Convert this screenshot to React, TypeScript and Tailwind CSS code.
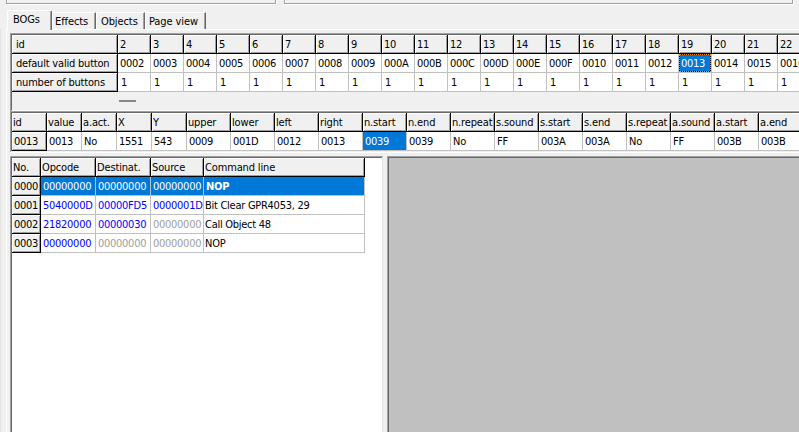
import React from "react";

const raised = "bg-[#f0f0f0] border-black shadow-[inset_1px_1px_0_#fff,inset_-1px_-1px_0_#a0a0a0]";
const plain = "bg-white border-[#c0c0c0]";

type CellProps = { w: number; fixed?: boolean; look?: string; pad?: string; children?: React.ReactNode };

function Cell({ w, fixed, look = "", pad = "pl-[2px]", children }: CellProps) {
  return (
    <div
      style={{ width: w }}
      className={`h-[19px] shrink-0 overflow-hidden whitespace-nowrap border-r border-b leading-[19px] ${pad} ${fixed ? raised : plain} ${look}`}
    >
      {children}
    </div>
  );
}

const ids = Array.from({ length: 21 }, (_, i) => i + 2);
const hex = (n: number) => n.toString(16).toUpperCase().padStart(4, "0");

const regs: [string, string, number][] = [
  ["id", "0013", 35], ["value", "0013", 35], ["a.act.", "No", 35], ["X", "1551", 35], ["Y", "543", 35],
  ["upper", "0009", 44], ["lower", "001D", 44], ["left", "0012", 44], ["right", "0013", 44],
  ["n.start", "0039", 44], ["n.end", "0039", 44], ["n.repeat", "No", 44], ["s.sound", "FF", 44],
  ["s.start", "003A", 44], ["s.end", "003A", 44], ["s.repeat", "No", 44], ["a.sound", "FF", 44],
  ["a.start", "003B", 44], ["a.end", "003B", 44],
];

const commands = [
  ["0000", "00000000", "00000000", "00000000", "NOP"],
  ["0001", "5040000D", "00000FD5", "0000001D", "Bit Clear GPR4053, 29"],
  ["0002", "21820000", "00000030", "00000000", "Call Object 48"],
  ["0003", "00000000", "00000000", "00000000", "NOP"],
];
const commandWidths = [29, 55, 55, 53, 161];
const inkCount = [4, 3, 2, 1];

const sunken = "border-l border-t border-[#a0a0a0]";
const sunkenInner = "border-l border-t border-[#696969]";

function Tab({ w, children }: { w: string; children: string }) {
  return (
    <div className={`mt-[2px] h-[17px] shrink-0 whitespace-nowrap border-t border-r border-l border-t-white border-r-[#696969] border-l-white pl-[3px] leading-[18px] tracking-[-0.1px] shadow-[inset_-1px_0_0_#a0a0a0] ${w}`}>
      {children}
    </div>
  );
}

export default function App() {
  return (
    <div className="flex h-[432px] w-[799px] flex-col overflow-hidden bg-[#f0f0f0] font-['DejaVu_Sans_Condensed','DejaVu_Sans',sans-serif] text-[11px] tracking-[-0.27px] text-black [font-stretch:condensed]">
      <div className="flex h-[10px] shrink-0 gap-[7px] pl-[6px]">
        <div className="h-[5px] w-[271px] border-r border-b border-white">
          <div className="h-[4px] border-r border-b border-l border-[#a0a0a0] shadow-[inset_1px_0_0_#fff]" />
        </div>
        <div className="h-[5px] w-[510px] border-r border-b border-white">
          <div className="h-[4px] border-r border-b border-l border-[#a0a0a0] shadow-[inset_1px_0_0_#fff]" />
        </div>
      </div>
      <div className="flex h-[19px] shrink-0 pl-[7px]">
        <div className="z-10 h-[20px] w-[45px] shrink-0 rounded-t-[2px] border-t border-r border-l border-t-white border-r-[#696969] border-l-white bg-[#f0f0f0] pl-[5px] leading-[18px] tracking-[-0.1px] shadow-[inset_-1px_0_0_#a0a0a0]">BOGs</div>
        <Tab w="w-[44px] !pl-[2px]">Effects</Tab>
        <Tab w="w-[49px] !pl-[4px]">Objects</Tab>
        <Tab w="w-[61px]">Page view</Tab>
      </div>
      <div className="flex min-h-0 flex-1">
        <div className="w-[6px] shrink-0 border-l border-[#e3e3e3]" />
        <div className="w-[4px] shrink-0 border-l border-white" />
        <div className="flex min-w-0 flex-1 flex-col">
          <div className="h-[4px] shrink-0 border-t border-white" />
          <div className={`h-[78px] shrink-0 ${sunken}`}>
            <div className={`h-[77px] overflow-hidden border-b border-b-white ${sunkenInner}`}>
              {["id", "default valid button", "number of buttons"].map((label, r) => (
                <div className="flex" key={label}>
                  <Cell w={106} fixed pad="pl-[4px]" look="tracking-[-0.2px]">{label}</Cell>
                  {ids.map((id) => (
                    <Cell key={id} w={33} fixed={r === 0} pad={r === 2 ? "pl-[3px]" : "pl-[2px]"}>
                      {r === 0 ? id : r === 2 ? "1" : id === 19 ? (
                        <div className="-ml-[2px] h-full bg-[#0078d7] pl-[2px] text-white shadow-[inset_0_0_0_1px_#000] outline-1 -outline-offset-1 outline-dotted outline-[#ff8728]">{hex(id)}</div>
                      ) : hex(id)}
                    </Cell>
                  ))}
                </div>
              ))}
              <div className="flex h-[17px] pt-[8px] pl-[107px]">
                <div className="h-[2px] w-[17px] bg-[#868686]" />
              </div>
            </div>
          </div>
          <div className={`h-[41px] shrink-0 ${sunken}`}>
            <div className={sunkenInner}>
              <div className="flex">
                {regs.map(([h, , w]) => <Cell key={h} w={w} fixed pad="pl-px" look="tracking-[-0.15px]">{h}</Cell>)}
              </div>
              <div className="flex">
                {regs.map(([h, v, w], i) => (
                  <Cell key={h} w={w} fixed={i === 0} look={h === "n.start" ? "!bg-[#0078d7] text-white" : ""}>{v}</Cell>
                ))}
              </div>
            </div>
          </div>
          <div className="mb-[3px] h-px shrink-0 bg-white" />
          <div className="flex min-h-0 flex-1 gap-[4px]">
            <div className={`w-[373px] shrink-0 ${sunken} border-r border-r-[#e3e3e3]`}>
              <div className={`h-full bg-white ${sunkenInner}`}>
                <div className="flex">
                  {["No.", "Opcode", "Destinat.", "Source", "Command line"].map((h, i) => (
                    <Cell key={h} w={commandWidths[i]} fixed pad="pl-px" look="tracking-[-0.15px]">{h}</Cell>
                  ))}
                </div>
                {commands.map((row, r) => (
                  <div className="flex" key={row[0]}>
                    {row.map((v, c) => (
                      <Cell
                        key={c}
                        w={commandWidths[c]}
                        fixed={c === 0}
                        pad={c === 4 && r > 0 ? "pl-px" : "pl-[2px]"}
                        look={c === 0 ? "" : r === 0 ? `!bg-[#0078d7] text-white ${c === 4 ? "font-bold" : ""}` : c === 4 ? "" : c <= inkCount[r] ? "text-[#0000ff]" : "text-[#a0a0a0]"}
                      >
                        {v}
                      </Cell>
                    ))}
                  </div>
                ))}
              </div>
            </div>
            <div className={`min-w-0 flex-1 ${sunken}`}>
              <div className={`h-full bg-[#c0c0c0] ${sunkenInner}`} />
            </div>
          </div>
        </div>
      </div>
    </div>
  );
}
